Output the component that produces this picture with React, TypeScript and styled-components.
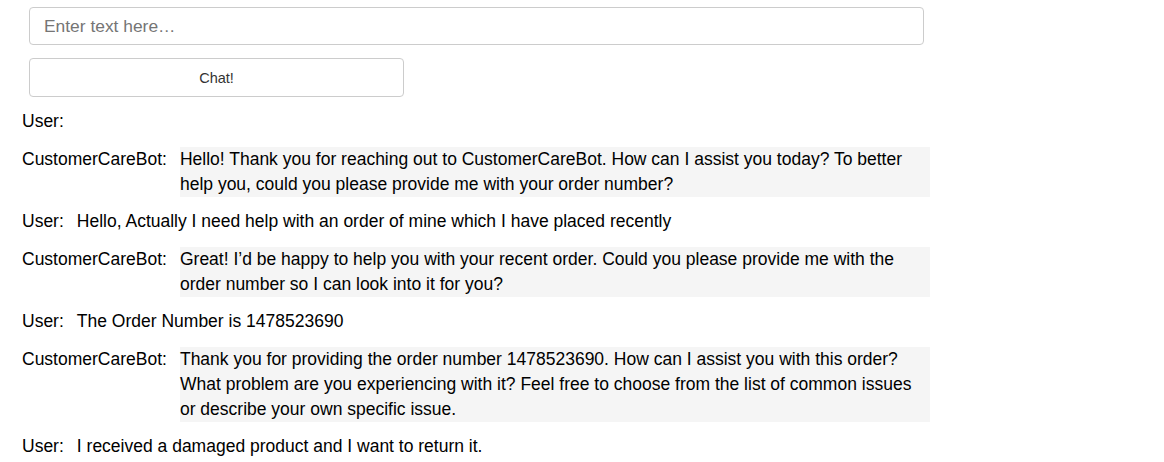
import React from "react";
import styled, { createGlobalStyle } from "styled-components";

const GlobalStyle = createGlobalStyle`
  html, body {
    margin: 0;
    padding: 0;
    background: #ffffff;
  }
  body {
    font-family: "Liberation Sans", Arial, sans-serif;
    color: #000000;
  }
`;

const Page = styled.div`
  padding-top: 7px;
  font-size: 17.5px;
`;

const Form = styled.form`
  display: flex;
  flex-direction: column;
  align-items: flex-start;
  gap: 13px;
  margin-left: 29px;
`;

const TextInput = styled.input`
  box-sizing: border-box;
  width: 895px;
  height: 38px;
  border: 1px solid #cccccc;
  border-radius: 4px;
  padding: 0 14px;
  font-family: "Liberation Sans", Arial, sans-serif;
  font-size: 17.4px;
  color: #000000;
  background: #ffffff;
  outline: none;

  &::placeholder {
    color: #757575;
  }
`;

const ChatButton = styled.button`
  box-sizing: border-box;
  width: 375px;
  height: 39px;
  border: 1px solid #cccccc;
  border-radius: 4px;
  background: #ffffff;
  color: #333333;
  font-family: "Liberation Sans", Arial, sans-serif;
  font-size: 14.5px;
  cursor: pointer;
`;

const ChatLog = styled.div`
  margin-top: 12px;
  padding-left: 22px;
`;

const Row = styled.div<{ $bot: boolean }>`
  display: flex;
  align-items: flex-start;
  line-height: 25px;
  margin-bottom: ${(p) => (p.$bot ? "12px" : "13px")};
`;

const Speaker = styled.span`
  flex: none;
  margin-right: 13px;
  white-space: nowrap;
`;

const UserText = styled.div``;

const BotBubble = styled.div`
  box-sizing: border-box;
  width: 750px;
  padding-right: 12px;
  background: #f5f5f5;
`;

type Message = { from: "User" | "CustomerCareBot"; text: string };

const messages: Message[] = [
  { from: "User", text: "" },
  {
    from: "CustomerCareBot",
    text:
      "Hello! Thank you for reaching out to CustomerCareBot. How can I assist you today? To better help you, could you please provide me with your order number?",
  },
  {
    from: "User",
    text: "Hello, Actually I need help with an order of mine which I have placed recently",
  },
  {
    from: "CustomerCareBot",
    text:
      "Great! I\u2019d be happy to help you with your recent order. Could you please provide me with the order number so I can look into it for you?",
  },
  { from: "User", text: "The Order Number is 1478523690" },
  {
    from: "CustomerCareBot",
    text:
      "Thank you for providing the order number 1478523690. How can I assist you with this order? What problem are you experiencing with it? Feel free to choose from the list of common issues or describe your own specific issue.",
  },
  { from: "User", text: "I received a damaged product and I want to return it." },
];

export default function App() {
  return (
    <>
      <GlobalStyle />
      <Page>
        <Form onSubmit={(e) => e.preventDefault()}>
          <TextInput type="text" placeholder="Enter text here…" />
          <ChatButton type="submit">Chat!</ChatButton>
        </Form>
        <ChatLog>
          {messages.map((m, i) => {
            const bot = m.from === "CustomerCareBot";
            return (
              <Row key={i} $bot={bot}>
                <Speaker>{m.from}:</Speaker>
                {bot ? (
                  <BotBubble>{m.text}</BotBubble>
                ) : m.text ? (
                  <UserText>{m.text}</UserText>
                ) : null}
              </Row>
            );
          })}
        </ChatLog>
      </Page>
    </>
  );
}
